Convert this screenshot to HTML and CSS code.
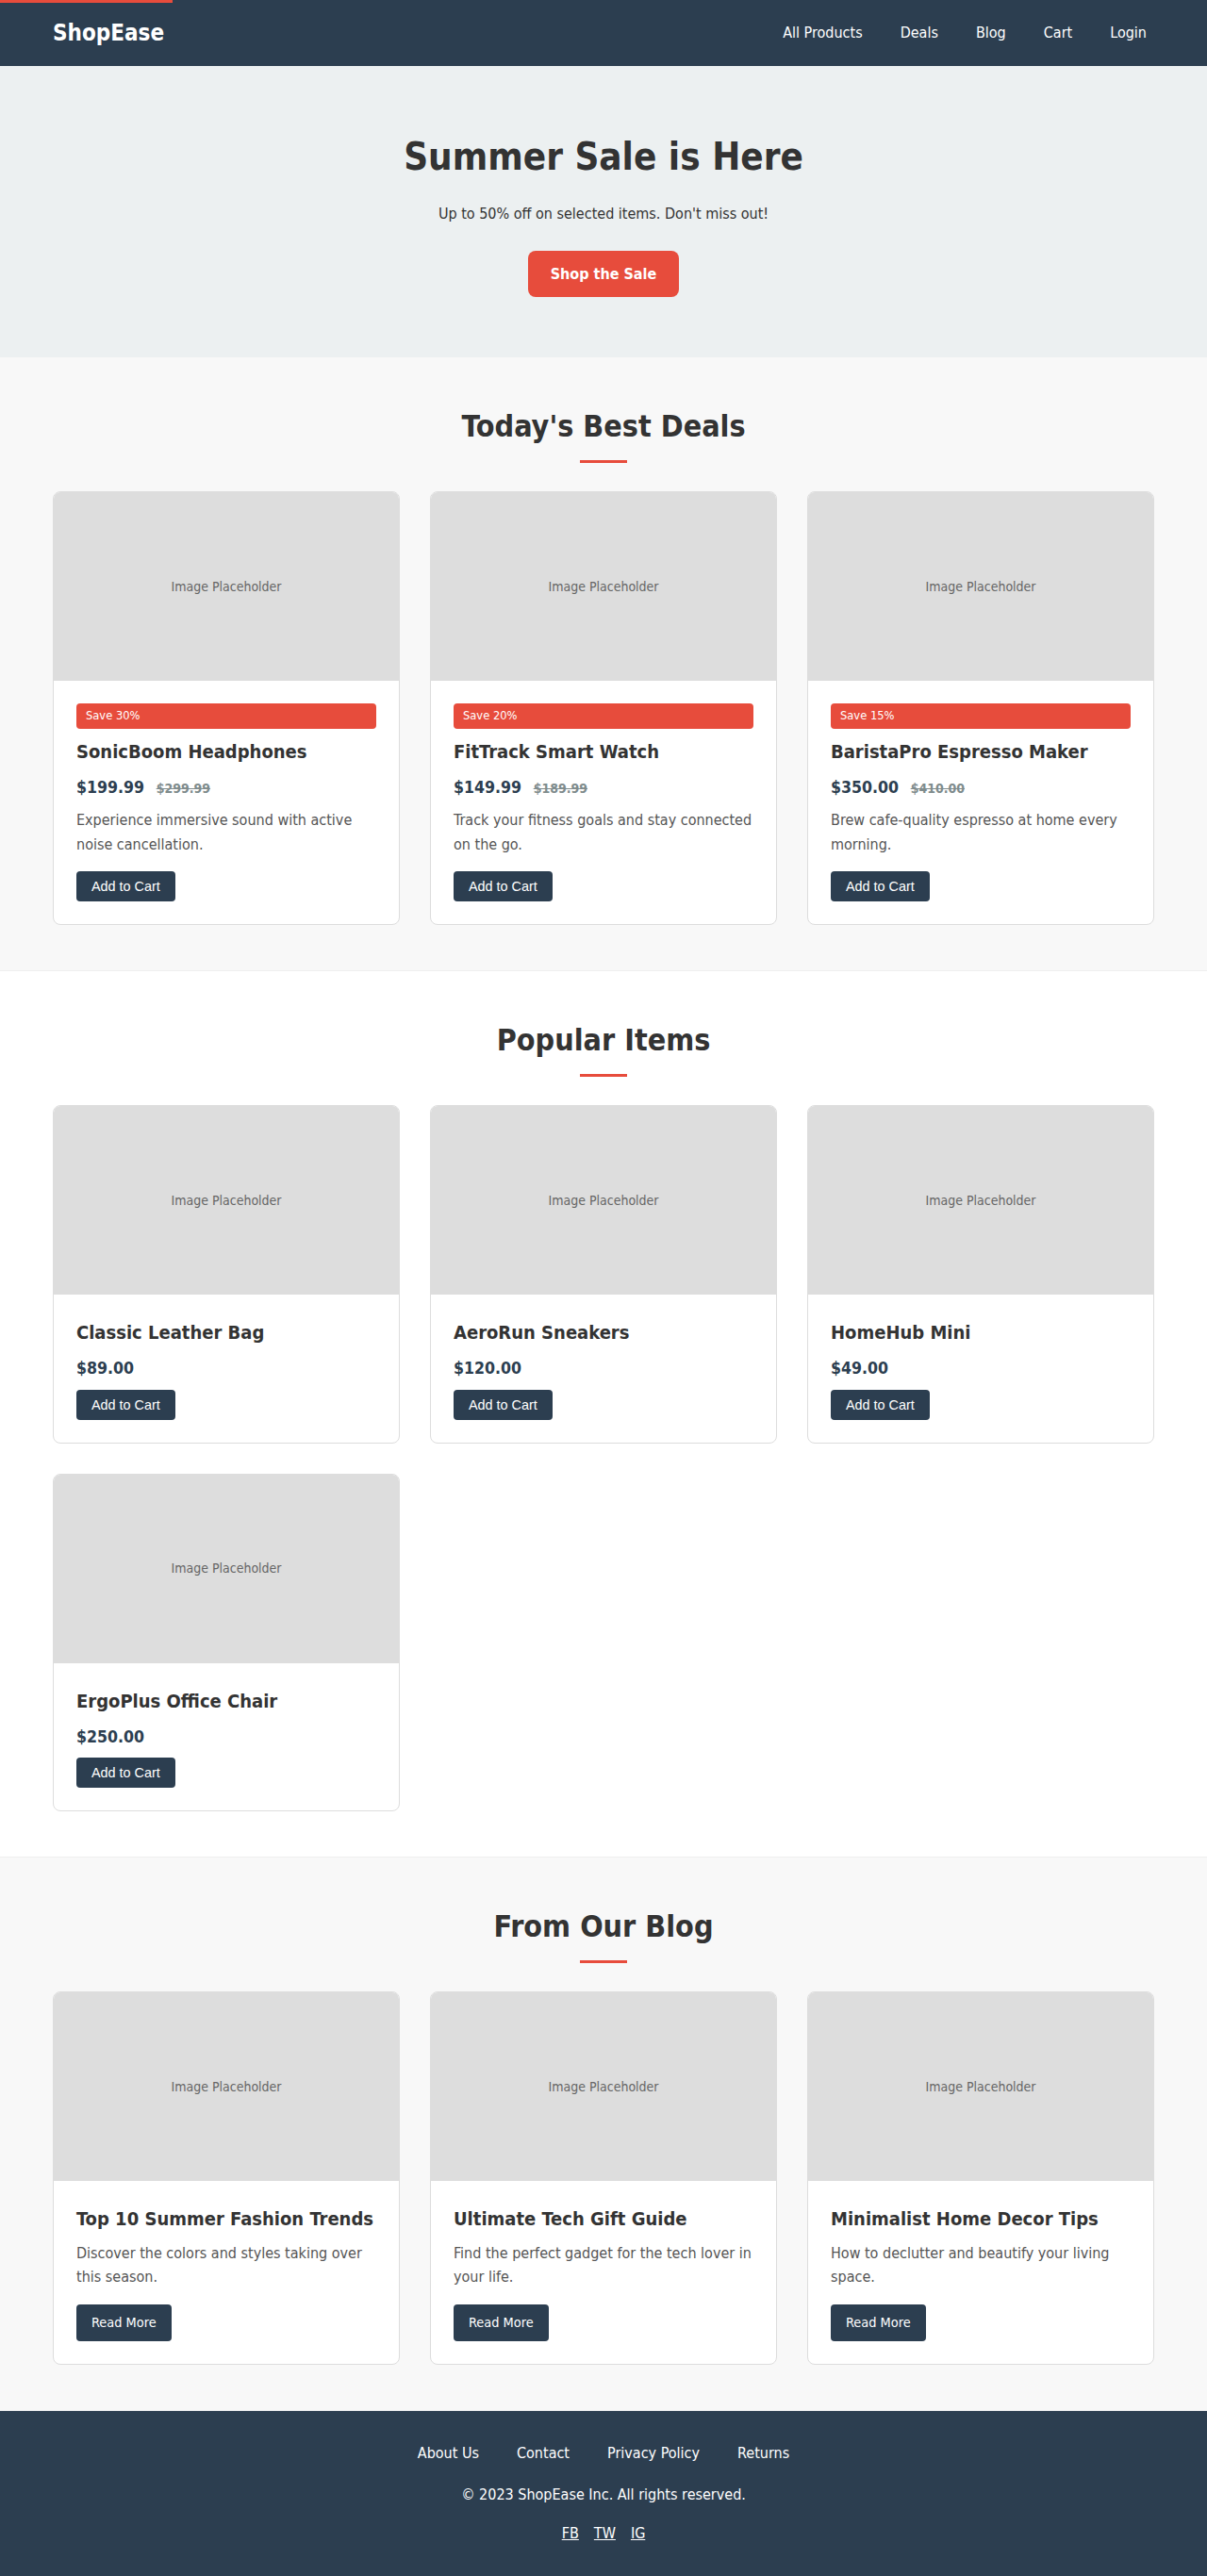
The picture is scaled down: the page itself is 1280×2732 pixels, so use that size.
FILE: index.html
```html
<!DOCTYPE html>
<html lang="en">
<head>
<meta charset="utf-8">
<title>ShopEase</title>
<link rel="stylesheet" href="styles.css">
</head>
<body>
<header class="site-header">
  <div class="progress-bar"></div>
  <div class="container header-inner">
    <a class="logo" href="#">ShopEase</a>
    <nav class="main-nav">
      <a href="#">All Products</a>
      <a href="#">Deals</a>
      <a href="#">Blog</a>
      <a href="#">Cart</a>
      <a href="#">Login</a>
    </nav>
  </div>
</header>

<section class="hero">
  <h1 class="hero-title">Summer Sale is Here</h1>
  <p class="hero-text">Up to 50% off on selected items. Don't miss out!</p>
  <a class="hero-btn" href="#">Shop the Sale</a>
</section>

<section class="section section-alt">
  <div class="container">
    <h2 class="section-title">Today's Best Deals</h2>
    <div class="grid">
      <article class="card">
        <div class="card-img">Image Placeholder</div>
        <div class="card-body">
          <span class="badge">Save 30%</span>
          <h3 class="card-title">SonicBoom Headphones</h3>
          <div class="price"><span class="price-now">$199.99</span> <span class="price-old">$299.99</span></div>
          <p class="card-text">Experience immersive sound with active noise cancellation.</p>
          <button class="btn btn-cart">Add to Cart</button>
        </div>
      </article>
      <article class="card">
        <div class="card-img">Image Placeholder</div>
        <div class="card-body">
          <span class="badge">Save 20%</span>
          <h3 class="card-title">FitTrack Smart Watch</h3>
          <div class="price"><span class="price-now">$149.99</span> <span class="price-old">$189.99</span></div>
          <p class="card-text">Track your fitness goals and stay connected on the go.</p>
          <button class="btn btn-cart">Add to Cart</button>
        </div>
      </article>
      <article class="card">
        <div class="card-img">Image Placeholder</div>
        <div class="card-body">
          <span class="badge">Save 15%</span>
          <h3 class="card-title">BaristaPro Espresso Maker</h3>
          <div class="price"><span class="price-now">$350.00</span> <span class="price-old">$410.00</span></div>
          <p class="card-text">Brew cafe-quality espresso at home every morning.</p>
          <button class="btn btn-cart">Add to Cart</button>
        </div>
      </article>
    </div>
  </div>
</section>

<section class="section">
  <div class="container">
    <h2 class="section-title">Popular Items</h2>
    <div class="grid">
      <article class="card">
        <div class="card-img">Image Placeholder</div>
        <div class="card-body">
          <h3 class="card-title">Classic Leather Bag</h3>
          <div class="price"><span class="price-now">$89.00</span></div>
          <button class="btn btn-cart">Add to Cart</button>
        </div>
      </article>
      <article class="card">
        <div class="card-img">Image Placeholder</div>
        <div class="card-body">
          <h3 class="card-title">AeroRun Sneakers</h3>
          <div class="price"><span class="price-now">$120.00</span></div>
          <button class="btn btn-cart">Add to Cart</button>
        </div>
      </article>
      <article class="card">
        <div class="card-img">Image Placeholder</div>
        <div class="card-body">
          <h3 class="card-title">HomeHub Mini</h3>
          <div class="price"><span class="price-now">$49.00</span></div>
          <button class="btn btn-cart">Add to Cart</button>
        </div>
      </article>
      <article class="card">
        <div class="card-img">Image Placeholder</div>
        <div class="card-body">
          <h3 class="card-title">ErgoPlus Office Chair</h3>
          <div class="price"><span class="price-now">$250.00</span></div>
          <button class="btn btn-cart">Add to Cart</button>
        </div>
      </article>
    </div>
  </div>
</section>

<section class="section section-alt">
  <div class="container">
    <h2 class="section-title">From Our Blog</h2>
    <div class="grid">
      <article class="card">
        <div class="card-img">Image Placeholder</div>
        <div class="card-body">
          <h3 class="card-title">Top 10 Summer Fashion Trends</h3>
          <p class="card-text">Discover the colors and styles taking over this season.</p>
          <a class="btn" href="#">Read More</a>
        </div>
      </article>
      <article class="card">
        <div class="card-img">Image Placeholder</div>
        <div class="card-body">
          <h3 class="card-title">Ultimate Tech Gift Guide</h3>
          <p class="card-text">Find the perfect gadget for the tech lover in your life.</p>
          <a class="btn" href="#">Read More</a>
        </div>
      </article>
      <article class="card">
        <div class="card-img">Image Placeholder</div>
        <div class="card-body">
          <h3 class="card-title">Minimalist Home Decor Tips</h3>
          <p class="card-text">How to declutter and beautify your living space.</p>
          <a class="btn" href="#">Read More</a>
        </div>
      </article>
    </div>
  </div>
</section>

<footer class="site-footer">
  <nav class="footer-links">
    <a href="#">About Us</a>
    <a href="#">Contact</a>
    <a href="#">Privacy Policy</a>
    <a href="#">Returns</a>
  </nav>
  <p class="copyright">&copy; 2023 ShopEase Inc. All rights reserved.</p>
  <div class="social">
    <a href="#">FB</a>
    <a href="#">TW</a>
    <a href="#">IG</a>
  </div>
</footer>
</body>
</html>
```

FILE: styles.css
```css
* { box-sizing: border-box; }

body {
  margin: 0;
  font-family: "DejaVu Sans Condensed", "DejaVu Sans", sans-serif;
  font-stretch: condensed;
  line-height: 1.6;
  color: #333;
  background: #fff;
}

.container {
  max-width: 1200px;
  margin: 0 auto;
  padding: 0 16px;
}

/* Header */
.site-header {
  background: #2c3e50;
  position: relative;
}
.progress-bar {
  position: absolute;
  top: 0;
  left: 0;
  width: 183px;
  height: 3px;
  background: #e74c3c;
}
.header-inner {
  display: flex;
  justify-content: space-between;
  align-items: center;
  height: 70px;
}
.logo {
  color: #fff;
  font-size: 24px;
  font-weight: bold;
  text-decoration: none;
}
.main-nav {
  display: flex;
  gap: 24px;
}
.main-nav a {
  color: #fff;
  text-decoration: none;
  padding: 8px;
  font-size: 16px;
}

/* Hero */
.hero {
  background: #ecf0f1;
  text-align: center;
  padding: 64px 16px;
}
.hero-title {
  font-size: 40px;
  line-height: 1.6;
  margin: 0 0 16px;
  color: #333;
}
.hero-text {
  font-size: 16px;
  margin: 0 0 26px;
}
.hero-btn {
  display: inline-block;
  background: #e74c3c;
  color: #fff;
  font-weight: bold;
  font-size: 16px;
  padding: 12px 24px;
  border-radius: 8px;
  text-decoration: none;
}

/* Sections */
.section {
  padding: 48px 0;
  border-bottom: 1px solid #eee;
}
.section-alt {
  background: #f8f8f8;
}
.section-title {
  text-align: center;
  font-size: 32px;
  line-height: 1.6;
  margin: 0 0 30px;
  color: #333;
}
.section-title::after {
  content: "";
  display: block;
  width: 50px;
  height: 3px;
  background: #e74c3c;
  margin: 10px auto 0;
}

.grid {
  display: grid;
  grid-template-columns: repeat(3, 1fr);
  gap: 32px;
}

/* Cards */
.card {
  background: #fff;
  border: 1px solid #ddd;
  border-radius: 8px;
  overflow: hidden;
}
.card-img {
  height: 200px;
  background: #ddd;
  display: flex;
  align-items: center;
  justify-content: center;
  color: #666;
  font-size: 14px;
}
.card-body {
  padding: 24px;
}
.badge {
  display: block;
  background: #e74c3c;
  color: #fff;
  font-size: 12.8px;
  padding: 3px 10px;
  border-radius: 4px;
  margin-bottom: 8px;
}
.card-title {
  font-size: 20px;
  line-height: 1.6;
  margin: 0 0 8px;
  color: #333;
}
.price {
  margin-bottom: 8px;
}
.price-now {
  font-size: 17.6px;
  font-weight: bold;
  color: #2c3e50;
}
.price-old {
  font-size: 14px;
  font-weight: bold;
  color: #7f8c8d;
  text-decoration: line-through;
  margin-left: 8px;
}
.card-text {
  color: #555;
  margin: 0 0 16px;
}
.btn {
  display: inline-block;
  background: #2c3e50;
  color: #fff;
  border: none;
  border-radius: 4px;
  padding: 8px 16px;
  font-size: 14.4px;
  text-decoration: none;
  cursor: pointer;
}
.btn-cart {
  font-family: "Liberation Sans", Arial, sans-serif;
  line-height: normal;
}

/* Footer */
.site-footer {
  background: #2c3e50;
  color: #fff;
  text-align: center;
  padding: 32px 16px;
}
.footer-links {
  display: flex;
  justify-content: center;
  gap: 40px;
  margin-bottom: 18px;
}
.footer-links a {
  color: #fff;
  text-decoration: none;
}
.copyright {
  margin: 0 0 16px;
}
.social {
  display: flex;
  justify-content: center;
  gap: 16px;
}
.social a {
  color: #fff;
  text-decoration: underline;
}
```
